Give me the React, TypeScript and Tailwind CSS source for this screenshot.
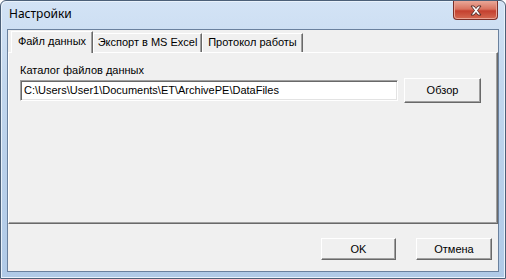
import React from 'react';

const ui = "font-['Liberation_Sans',Arial,sans-serif] text-[11px] leading-[13px] text-black";

const Btn = ({ label, className = '' }: { label: string; className?: string }) => (
  <div
    className={`flex items-center justify-center bg-[#f0f0f0] border border-t-white border-l-white border-r-[#696969] border-b-[#696969] shadow-[inset_-1px_-1px_0_#a0a0a0] ${className}`}
  >
    <span className={ui}>{label}</span>
  </div>
);

const App = () => {
  return (
    <div className="w-[506px] h-[279px] bg-white">
      <div className="w-[506px] h-[279px] flex flex-col rounded-t-[6px] border border-[#4c6078] bg-[linear-gradient(180deg,#d3e3f5_0%,#c2d7ee_30%,#b9d0ea_60%,#b0cae7_100%)] shadow-[inset_1px_1px_0_#e9f2fb,inset_-1px_-1px_0_#e9f2fb]">
        {/* Title bar */}
        <div className="h-[28px] flex items-start shrink-0">
          <span className="pl-[8px] pt-[5px] font-['Noto_Sans',sans-serif] text-[12px] leading-[16px] text-black">
            Настройки
          </span>
          <div className="ml-auto mr-[7px] w-[45px] h-[19px] rounded-b-[4px] border border-t-0 border-[#7b2f28] bg-[linear-gradient(180deg,#e9a898_0%,#d9725f_45%,#c4402f_55%,#d46a52_100%)] shadow-[inset_0_0_0_1px_#eaa394] flex items-center justify-center">
            <svg width="14" height="11" viewBox="0 0 14 11">
              <path
                d="M2 1 L5 1 L7 3.5 L9 1 L12 1 L8.5 5.5 L12 10 L9 10 L7 7.5 L5 10 L2 10 L5.5 5.5 Z"
                fill="#ffffff"
                stroke="#4a2420"
                strokeWidth="0.9"
                strokeLinejoin="round"
              />
            </svg>
          </div>
        </div>

        {/* Client area */}
        <div className="mx-[6px] h-[243px] shrink-0 border border-[#6a819e] bg-[#f0f0f0] flex flex-col">
          {/* Tabs */}
          <div className="mt-[1px] h-[21px] flex items-end pl-[3px] relative z-10">
            <div className="w-[82px] h-[22px] -mb-[1px] bg-[#f0f0f0] border-t border-l border-t-white border-l-white border-r border-r-[#696969] shadow-[inset_-1px_0_0_#a0a0a0] flex items-start justify-center pt-[3px]">
              <span className={ui}>Файл данных</span>
            </div>
            <div className="w-[109px] h-[19px] bg-[#f0f0f0] border-t border-l border-t-white border-l-white border-r border-r-[#696969] shadow-[inset_-1px_0_0_#a0a0a0] flex items-start justify-center pt-[2px]">
              <span className={ui}>Экспорт в MS Excel</span>
            </div>
            <div className="w-[101px] h-[19px] bg-[#f0f0f0] border-t border-l border-t-white border-l-white border-r border-r-[#696969] shadow-[inset_-1px_0_0_#a0a0a0] flex items-start justify-center pt-[2px]">
              <span className={ui}>Протокол работы</span>
            </div>
          </div>

          {/* Tab page */}
          <div className="w-[490px] h-[172px] border border-t-white border-l-white border-r-[#696969] border-b-[#696969] shadow-[inset_-1px_-1px_0_#a0a0a0] pl-[11px] pt-[11px]">
            <div className={ui}>Каталог файлов данных</div>
            <div className="mt-[1px] flex items-center">
              <div className="w-[378px] h-[21px] bg-white border border-t-[#a0a0a0] border-l-[#a0a0a0] border-r-white border-b-white shadow-[inset_1px_1px_0_#696969,inset_-1px_-1px_0_#e3e3e3] flex items-center pl-[3px]">
                <span className={ui}>C:\Users\User1\Documents\ET\ArchivePE\DataFiles</span>
              </div>
              <Btn label="Обзор" className="ml-[6px] w-[77px] h-[25px]" />
            </div>
          </div>

          {/* Buttons */}
          <div className="flex justify-end gap-[20px] pr-[6px] pt-[14px]">
            <Btn label="OK" className="w-[75px] h-[22px]" />
            <Btn label="Отмена" className="w-[76px] h-[22px]" />
          </div>
        </div>
      </div>
    </div>
  );
};

export default App;
